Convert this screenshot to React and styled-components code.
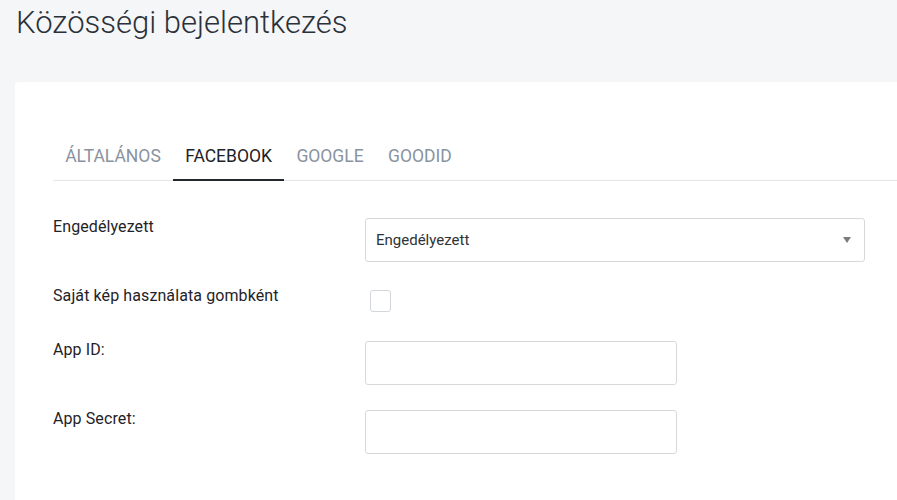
import React, { useState } from "react";
import styled, { createGlobalStyle } from "styled-components";

const GlobalStyle = createGlobalStyle`
  html, body {
    margin: 0;
    padding: 0;
    background: #f5f6f8;
    font-family: Roboto, "Liberation Sans", sans-serif;
  }
`;

const Page = styled.div`
  padding: 5px 0 0 15px;
  overflow: hidden;
  height: 495px;
`;

const Title = styled.h1`
  margin: 0 0 0 1px;
  font-size: 31px;
  line-height: 36px;
  font-weight: 300;
  color: #2b3138;
`;

const Card = styled.div`
  margin-top: 41px;
  width: 1000px;
  background: #fff;
  border-radius: 4px 0 0 0;
  padding: 51px 0 40px 38px;
  box-sizing: border-box;
`;

const TabBar = styled.div`
  display: flex;
  border-bottom: 1px solid #e4e6e8;
`;

const Tab = styled.div`
  padding: 13px 12.2px 13px 12.2px;
  line-height: 20px;
  font-size: 17.5px;
  text-transform: uppercase;
  color: ${(p) => (p.active ? "#1f2328" : "#8993a0")};
  border-bottom: 2px solid ${(p) => (p.active ? "#23272b" : "transparent")};
  margin-bottom: -1px;
  cursor: pointer;
`;

const Form = styled.div`
  padding-top: 37px;
  display: flex;
  flex-direction: column;
`;

const Row = styled.div`
  display: grid;
  grid-template-columns: 312px auto;
  align-items: start;
  margin-bottom: ${(p) => p.gap || 25}px;
`;

const Label = styled.label`
  font-size: 16px;
  line-height: 18px;
  letter-spacing: 0.1px;
  color: #1f2328;
`;

const SelectBox = styled.div`
  position: relative;
  width: 500px;
  height: 44px;
  box-sizing: border-box;
  border: 1px solid #d6d9dc;
  border-radius: 3px;
  display: flex;
  align-items: center;
  padding: 0 10px;
  font-size: 15px;
  color: #2e3338;
`;

const Arrow = styled.span`
  position: absolute;
  right: 13px;
  top: 18px;
  width: 0;
  height: 0;
  border-left: 4px solid transparent;
  border-right: 4px solid transparent;
  border-top: 6px solid #7a7d80;
`;

const Check = styled.div`
  width: 21px;
  height: 22px;
  margin: 3px 0 0 5px;
  box-sizing: border-box;
  border: 1px solid #d3d6da;
  border-radius: 3px;
  background: #fff;
`;

const Input = styled.input`
  width: 312px;
  height: 44px;
  box-sizing: border-box;
  border: 1px solid #d6d9dc;
  border-radius: 3px;
  padding: 0 11px;
  font: inherit;
  font-size: 15px;
  outline: none;
`;

const tabs = ["Általános", "Facebook", "Google", "GoodID"];

export default function App() {
  const [active, setActive] = useState(1);
  return (
    <>
      <GlobalStyle />
      <Page>
        <Title>Közösségi bejelentkezés</Title>
        <Card>
          <TabBar>
            {tabs.map((t, i) => (
              <Tab key={t} active={i === active} onClick={() => setActive(i)}>
                {t}
              </Tab>
            ))}
          </TabBar>
          <Form>
            <Row gap={25}>
              <Label>Engedélyezett</Label>
              <SelectBox>
                Engedélyezett
                <Arrow />
              </SelectBox>
            </Row>
            <Row gap={29}>
              <Label>Saját kép használata gombként</Label>
              <Check />
            </Row>
            <Row gap={25}>
              <Label>App ID:</Label>
              <Input />
            </Row>
            <Row gap={25}>
              <Label>App Secret:</Label>
              <Input />
            </Row>
          </Form>
        </Card>
      </Page>
    </>
  );
}
